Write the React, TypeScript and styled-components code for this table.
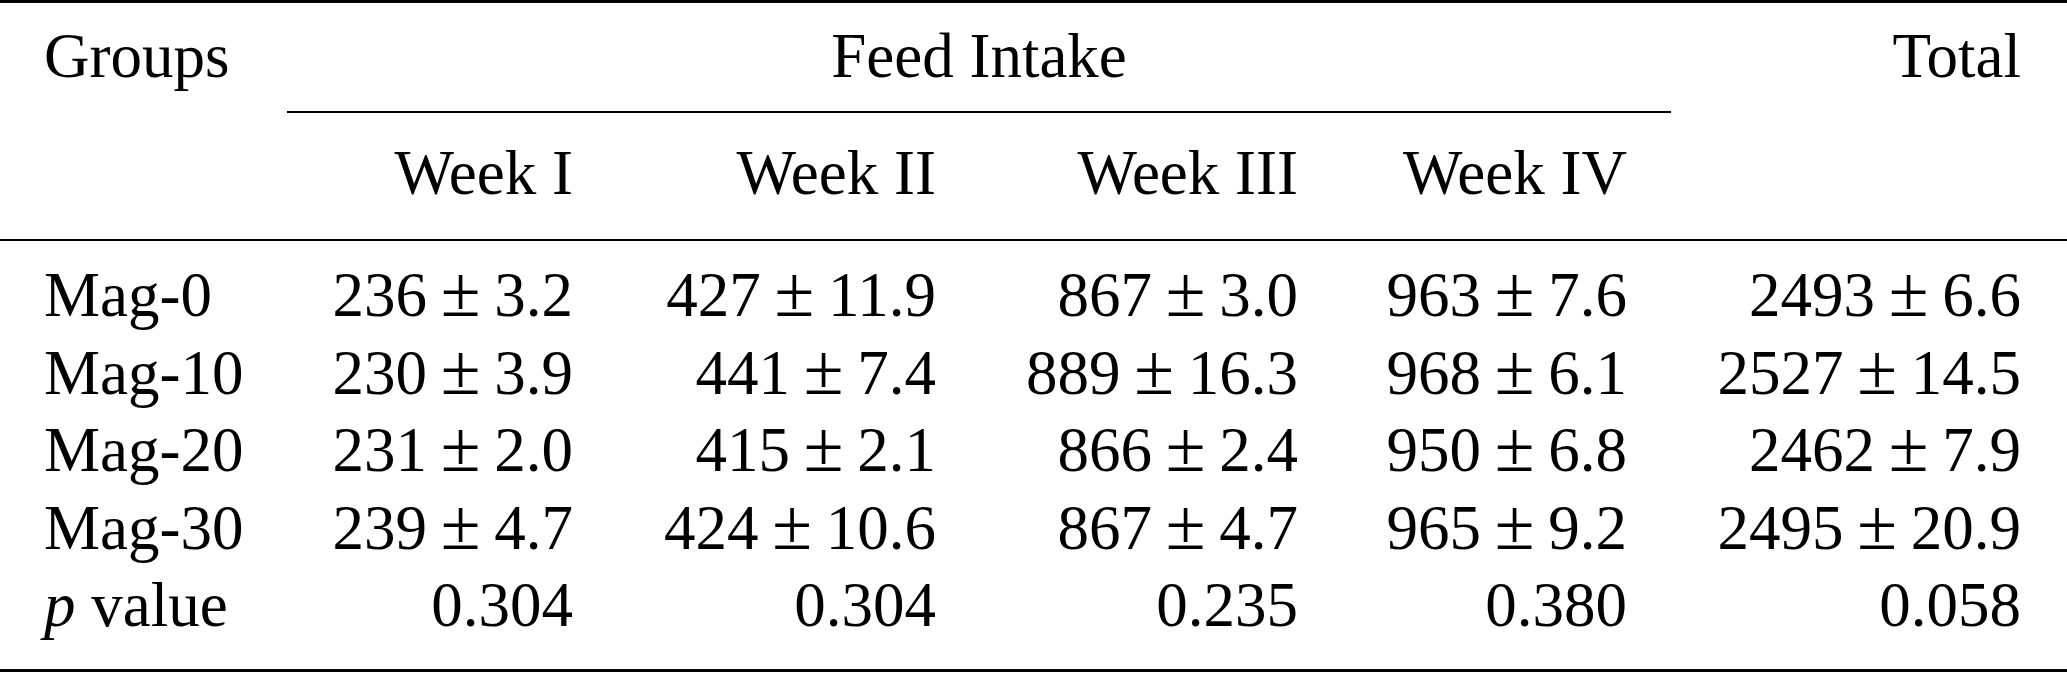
import React from "react";
import styled, { createGlobalStyle } from "styled-components";

// 표 전체 설정
const GlobalStyle = createGlobalStyle`
  html, body {
    margin: 0;
    padding: 0;
    background: #fff;
  }
  body {
    font-family: "Liberation Serif", "Times New Roman", Times, serif;
    color: #000;
  }
`;

const COLS = "287px 330px 363px 362px 329px 396px";

const Table = styled.div`
  width: 2067px;
  font-family: "Liberation Serif", "Times New Roman", Times, serif;
  font-size: 63px;
  line-height: 77.5px;
  color: #000;
`;

const Rule = styled.div<{ $h: number }>`
  height: ${(props) => props.$h}px;
  background: #000;
`;

const RuleRow = styled.div`
  display: grid;
  grid-template-columns: ${COLS};
`;

const PartRule = styled.div<{ $span: string }>`
  grid-column: ${(props) => props.$span};
  height: 2px;
  background: #000;
`;

const Row = styled.div<{ $pt?: number; $pb?: number }>`
  display: grid;
  grid-template-columns: ${COLS};
  height: 77.5px;
  padding: ${(props) => props.$pt || 0}px 0 ${(props) => props.$pb || 0}px;
`;

const Body = styled.div`
  padding: 16px 0 24.5px;
`;

const Cell = styled.div<{ $align?: string; $span?: string }>`
  grid-column: ${(props) => props.$span || "auto"};
  padding: 0 44px;
  text-align: ${(props) => props.$align || "right"};
  white-space: nowrap;
  &:last-child {
    padding-right: 46px;
  }
`;

const Pm = styled.span`
  font-size: 1.15em;
  line-height: 0;
  margin: 0 0.19em;
`;

const Em = styled.i`
  font-style: italic;
`;

type Pair = [string, string];

const data: { name: string; vals: Pair[] }[] = [
  { name: "Mag-0", vals: [["236", "3.2"], ["427", "11.9"], ["867", "3.0"], ["963", "7.6"], ["2493", "6.6"]] },
  { name: "Mag-10", vals: [["230", "3.9"], ["441", "7.4"], ["889", "16.3"], ["968", "6.1"], ["2527", "14.5"]] },
  { name: "Mag-20", vals: [["231", "2.0"], ["415", "2.1"], ["866", "2.4"], ["950", "6.8"], ["2462", "7.9"]] },
  { name: "Mag-30", vals: [["239", "4.7"], ["424", "10.6"], ["867", "4.7"], ["965", "9.2"], ["2495", "20.9"]] },
];

const pValues = ["0.304", "0.304", "0.235", "0.380", "0.058"];
const weeks = ["Week I", "Week II", "Week III", "Week IV"];

function Val({ v }: { v: Pair }) {
  return (
    <Cell>
      {v[0]}
      <Pm>±</Pm>
      {v[1]}
    </Cell>
  );
}

export default function App() {
  return (
    <Table>
      <GlobalStyle />
      <Rule $h={3} />
      <Row $pt={15} $pb={15.5}>
        <Cell $align="left">Groups</Cell>
        <Cell $align="center" $span="2 / 6">
          Feed Intake
        </Cell>
        <Cell>Total</Cell>
      </Row>
      <RuleRow>
        <PartRule $span="2 / 6" />
      </RuleRow>
      <Row $pt={22} $pb={26.5}>
        <Cell />
        {weeks.map((w) => (
          <Cell key={w}>{w}</Cell>
        ))}
        <Cell />
      </Row>
      <Rule $h={2} />
      <Body>
        {data.map((r) => (
          <Row key={r.name}>
            <Cell $align="left">{r.name}</Cell>
            {r.vals.map((v, i) => (
              <Val key={i} v={v} />
            ))}
          </Row>
        ))}
        <Row>
          <Cell $align="left">
            <Em>p</Em> value
          </Cell>
          {pValues.map((p, i) => (
            <Cell key={i}>{p}</Cell>
          ))}
        </Row>
      </Body>
      <Rule $h={3} />
    </Table>
  );
}
